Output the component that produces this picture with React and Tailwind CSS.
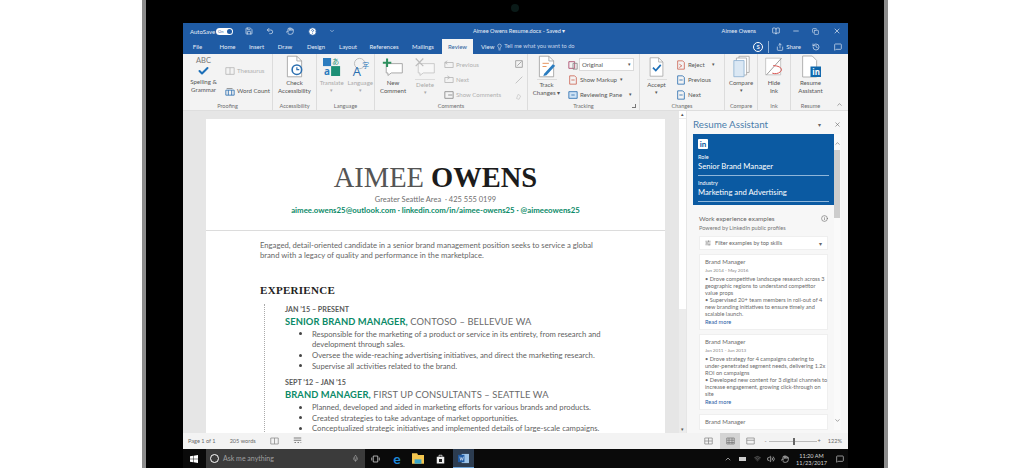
import React from 'react';
import {
  Save, Undo2, Hand, HelpCircle, ChevronDown, ChevronUp, Lightbulb, Share, History, MessageSquare,
  X, Minus, Copy, BookOpen, Check, SlidersHorizontal, Info, Mic, Volume2, Wifi,
} from 'lucide-react';

const tabs = [
  ['File', 'w-[29px]'],
  ['Home', 'w-[31px]'],
  ['Insert', 'w-[27px]'],
  ['Draw', 'w-[30px]'],
  ['Design', 'w-[32px]'],
  ['Layout', 'w-[32px]'],
  ['References', 'w-[40px]'],
  ['Mailings', 'w-[38px]'],
];

const DocIcon = ({ className, children }) => (
  <svg viewBox="0 0 24 28" className={className} fill="none">
    <path d="M3 1h12l6 6v20H3z" fill="#fff" stroke="#9a9a9a" />
    <path d="M15 1v6h6" stroke="#9a9a9a" />
    {children}
  </svg>
);

const SmallIcon = ({ color = '#b7b7b7', children }) => (
  <svg viewBox="0 0 12 12" className="w-[10px] h-[10px] shrink-0" fill="none" stroke={color}>
    {children}
  </svg>
);

const Group = ({ label, className, children, launcher }) => (
  <div className={`relative flex flex-col h-full border-r border-[#dcdcdc] ${className}`}>
    <div className="flex-1 min-h-0 flex">{children}</div>
    <div className="h-[8px] text-center text-[5.6px] leading-[8px] text-[#6f6f6f]">{label}</div>
    {launcher && <span className="absolute right-[3px] bottom-[2px] w-[4px] h-[4px] border-r border-b border-[#777]" />}
  </div>
);

const BigButton = ({ icon, lines, className = '', muted, caret, rule }) => (
  <div className={`flex flex-col items-center text-[6.1px] leading-[8px] ${muted ? 'text-[#a9a9a9]' : 'text-[#555]'} ${className}`}>
    <div className="h-[25px] flex items-center justify-center">{icon}</div>
    {rule && <span className="w-[20px] h-px bg-[#dcdcdc] mb-[1px]" />}
    {lines.map((l) => <span key={l} className="whitespace-nowrap">{l}</span>)}
    {caret && <span className="text-[5px] leading-[6px]">▾</span>}
  </div>
);

const SmallButton = ({ icon, label, muted, caret }) => (
  <div className={`flex items-center gap-[2px] h-[15px] text-[6.1px] whitespace-nowrap ${muted ? 'text-[#b0b0b0]' : 'text-[#555]'}`}>
    {icon}
    <span>{label}</span>
    {caret && <span className="text-[5px] ml-[1px]">▾</span>}
  </div>
);

const Ribbon = () => (
  <div className="h-[57px] bg-[#f3f3f3] flex border-b border-[#dedede] shrink-0">
    <Group label="Proofing" className="w-[90px]">
      <div className="w-[39px] pl-[2px] flex flex-col items-center text-[6.1px] leading-[7.5px] text-[#555]">
        <span className="text-[7.5px] leading-[8px] text-[#777] mt-[3px]">ABC</span>
        <Check className="w-[15px] h-[12px] text-[#1c6fb8]" strokeWidth={4} />
        <span className="mt-[1px]">Spelling &amp;</span>
        <span>Grammar</span>
      </div>
      <div className="pl-[3px] pt-[9px] flex flex-col gap-[5px]">
        <SmallButton muted label="Thesaurus" icon={<SmallIcon><path d="M1 2h10v8H1zM6 2v8" /></SmallIcon>} />
        <SmallButton
          label="Word Count"
          icon={<SmallIcon color="#2b6fb0"><path d="M1 5h10v6H1zM4 5v6M8 5v6" /><path d="M2 3h7" stroke="#888" /></SmallIcon>}
        />
      </div>
    </Group>
    <Group label="Accessibility" className="w-[44px]">
      <BigButton
        className="flex-1"
        lines={['Check', 'Accessibility']}
        icon={
          <DocIcon className="w-[19px] h-[23px]">
            <circle cx="15" cy="18" r="6" fill="#fff" stroke="#2b6fb0" strokeWidth="2" />
            <path d="M15 15v3h3" stroke="#2b6fb0" strokeWidth="1.5" />
          </DocIcon>
        }
      />
    </Group>
    <Group label="Language" className="w-[58px]">
      <BigButton
        className="w-[30px]"
        muted
        caret
        lines={['Translate']}
        icon={
          <svg viewBox="0 0 20 22" className="w-[18px] h-[20px] overflow-visible">
            <rect x="0" y="1" width="9" height="9" fill="#2b7cbf" />
            <rect x="9" y="10" width="10" height="11" fill="#1d8f76" />
            <text x="10" y="8" fontSize="8" fill="#1d8f76" fontFamily="'Noto Sans CJK JP', sans-serif">あ</text>
            <text x="1" y="20" fontSize="11" fill="#2b7cbf" fontFamily="'Open Sans', sans-serif" fontWeight="700">a</text>
          </svg>
        }
      />
      <BigButton
        className="w-[28px]"
        muted
        caret
        lines={['Language']}
        icon={
          <svg viewBox="0 0 22 22" className="w-[19px] h-[20px] overflow-visible">
            <circle cx="10" cy="7" r="6" fill="none" stroke="#b5b5b5" />
            <text x="2" y="21" fontSize="15" fill="#2b6fb0" fontFamily="'Open Sans', sans-serif">A</text>
            <text x="13" y="12" fontSize="8" fill="#2b7cbf" fontFamily="'Noto Sans CJK SC', sans-serif">字</text>
          </svg>
        }
      />
    </Group>
    <Group label="Comments" className="w-[153px]">
      <BigButton
        className="w-[36px]"
        lines={['New', 'Comment']}
        icon={
          <svg viewBox="0 0 26 22" className="w-[22px] h-[20px]" fill="none">
            <path d="M5 7h19v11H11l-4 3v-3H5z" fill="#fff" stroke="#9a9a9a" />
            <path d="M6 1v10M1 6h10" stroke="#2e8f5e" strokeWidth="2.4" />
          </svg>
        }
      />
      <BigButton
        className="w-[28px]"
        muted
        caret
        rule
        lines={['Delete']}
        icon={
          <svg viewBox="0 0 26 22" className="w-[22px] h-[20px]" fill="none" stroke="#c4c4c4">
            <path d="M5 7h19v11H11l-4 3v-3H5z" fill="#f7f7f7" />
            <path d="M2 1l9 9M11 1l-9 9" stroke="#bbb" strokeWidth="1.4" />
          </svg>
        }
      />
      <div className="flex-1 pl-[5px] pt-[3px] flex flex-col">
        <SmallButton muted label="Previous" icon={<SmallIcon><path d="M1 3h10v6H1zM4 1L1 3l3 2" /></SmallIcon>} />
        <SmallButton muted label="Next" icon={<SmallIcon><path d="M1 3h10v6H1zM4 1l3 2-3 2" /></SmallIcon>} />
        <SmallButton muted label="Show Comments" icon={<SmallIcon color="#888"><path d="M1 2h10v8H1zM5 6h5" /></SmallIcon>} />
      </div>
      <div className="w-[16px] pt-[5px] flex flex-col gap-[6px] items-center">
        <SmallIcon color="#999"><path d="M2 2h8v8H2zM4 8l5-5" /></SmallIcon>
        <SmallIcon color="#bbb"><path d="M2 10l8-8" /></SmallIcon>
        <SmallIcon color="#ccc"><path d="M3 9l2-5 3 2-2 4z" /></SmallIcon>
      </div>
    </Group>
    <Group label="Tracking" className="w-[112px]" launcher>
      <BigButton
        className="w-[37px]"
        rule
        lines={['Track', 'Changes ▾']}
        icon={
          <DocIcon className="w-[19px] h-[23px]">
            <path d="M7 10h8M7 14h5" stroke="#e07b39" />
            <path d="M9 23l11-12 3 2-11 12-4 1z" fill="#2b7cbf" />
          </DocIcon>
        }
      />
      <div className="flex-1 pl-[3px] pt-[4px] flex flex-col text-[6.1px] text-[#555]">
        <div className="flex items-center gap-[1px] h-[14px]">
          <SmallIcon color="#a46"><path d="M1 2h7v8H1z" /><path d="M6 4h5v7H6z" stroke="#888" /></SmallIcon>
          <div className="w-[55px] h-[13px] bg-white border border-[#dadada] flex items-center justify-between px-[2px]">
            <span>Original</span>
            <span className="text-[5px]">▾</span>
          </div>
        </div>
        <div className="mt-[1px]">
          <SmallButton caret label="Show Markup" icon={<SmallIcon color="#c65"><path d="M2 1h6l2 2v8H2z" /><path d="M4 6h4" /></SmallIcon>} />
        </div>
        <div className="flex items-center justify-between pr-[7px]">
          <SmallButton label="Reviewing Pane" icon={<SmallIcon color="#2b6fb0"><path d="M1 2h10v8H1z" fill="#cfe3f5" /><path d="M4 6h4" /></SmallIcon>} />
          <span className="text-[5px]">▾</span>
        </div>
      </div>
    </Group>
    <Group label="Changes" className="w-[85px]">
      <BigButton
        className="w-[33px]"
        caret
        rule
        lines={['Accept']}
        icon={
          <DocIcon className="w-[17px] h-[22px]">
            <path d="M7 15l4 4 7-8" stroke="#1c6fb8" strokeWidth="2.4" />
          </DocIcon>
        }
      />
      <div className="flex-1 pl-[3px] pt-[3px] flex flex-col">
        <div className="flex items-center justify-between pr-[9px]">
          <SmallButton label="Reject" icon={<SmallIcon color="#c65"><path d="M2 1h6l2 2v8H2z" /><path d="M4 5l3 2-3 2" /></SmallIcon>} />
          <span className="text-[5px] text-[#555]">▾</span>
        </div>
        <SmallButton label="Previous" icon={<SmallIcon color="#2b6fb0"><path d="M2 1h6l2 2v8H2z" /><path d="M8 6H4" /></SmallIcon>} />
        <SmallButton label="Next" icon={<SmallIcon color="#2b6fb0"><path d="M2 1h6l2 2v8H2z" /><path d="M4 6h4" /></SmallIcon>} />
      </div>
    </Group>
    <Group label="Compare" className="w-[33px]">
      <BigButton
        className="flex-1"
        caret
        lines={['Compare']}
        icon={
          <svg viewBox="0 0 20 26" className="w-[17px] h-[23px]" fill="#fff" stroke="#a8a8a8">
            <path d="M7 1h12v19H7z" />
            <path d="M4 3h12v20H4z" />
            <path d="M1 6h12v19H1z" fill="#dbe8f4" stroke="#8fb2d2" />
          </svg>
        }
      />
    </Group>
    <Group label="Ink" className="w-[33px]">
      <BigButton
        className="flex-1"
        lines={['Hide', 'Ink']}
        icon={
          <svg viewBox="0 0 24 24" className="w-[20px] h-[21px]" fill="none">
            <path d="M2 2h18v20H2z" fill="#fff" stroke="#bdbdbd" />
            <path d="M3 22L21 2" stroke="#8a8a8a" />
            <path d="M11 11c8 0 12 4 9 7-3 3-7 3-10 2" stroke="#d9534f" strokeWidth="1.2" />
          </svg>
        }
      />
    </Group>
    <Group label="Resume" className="w-[39px] border-r-0">
      <BigButton
        className="flex-1"
        lines={['Resume', 'Assistant']}
        icon={
          <svg viewBox="0 0 24 26" className="w-[21px] h-[23px]" fill="none">
            <path d="M3 1h11l5 5v19H3z" fill="#fff" stroke="#a8a8a8" />
            <rect x="12" y="13" width="12" height="12" fill="#0f68ad" />
            <text x="14" y="23" fontSize="9" fontWeight="700" fill="#fff" fontFamily="'Open Sans', sans-serif">in</text>
          </svg>
        }
      />
    </Group>
    <div className="flex-1 flex items-end justify-center pb-[2px]">
      <ChevronUp className="w-[7px] h-[7px] text-[#666]" />
    </div>
  </div>
);

const TitleBar = () => (
  <div className="bg-[#1f5ba4] text-[#e7eef7] shrink-0">
    <div className="h-[16px] flex items-center text-[6px] relative">
      <span className="ml-[7px] w-[26px] whitespace-nowrap">AutoSave</span>
      <span className="ml-[0px] w-[17px] h-[7px] rounded-full bg-white text-[#1f5ba4] text-[4px] leading-[7px] pl-[2px] relative">
        On
        <span className="absolute right-[1px] top-[1px] w-[5px] h-[5px] rounded-full bg-[#1f5ba4]" />
      </span>
      <Save className="ml-[12px] w-[8px] h-[8px]" />
      <Undo2 className="ml-[13px] w-[8px] h-[8px]" />
      <Hand className="ml-[12px] w-[8px] h-[8px]" />
      <HelpCircle className="ml-[14px] w-[9px] h-[9px] text-[#1f5ba4] fill-white" />
      <ChevronDown className="ml-[12px] w-[6px] h-[6px]" />
      <span className="absolute left-[290px] text-[5.6px] whitespace-nowrap">Aimee Owens Resume.docx - Saved ▾</span>
      <span className="ml-auto text-[5.6px] whitespace-nowrap">Aimee Owens</span>
      <BookOpen className="ml-[16px] w-[8px] h-[8px]" />
      <Minus className="ml-[12px] w-[8px] h-[8px]" />
      <Copy className="ml-[12px] w-[7px] h-[7px]" />
      <X className="ml-[14px] mr-[7px] w-[8px] h-[8px]" />
    </div>
    <div className="h-[15px] flex items-center text-[6px]">
      {tabs.map(([name, w]) => (
        <span key={name} className={`${w} text-center`}>{name}</span>
      ))}
      <span className="w-[31px] h-full bg-[#f3f3f3] text-[#2b5f9e] text-center leading-[16px]">Review</span>
      <span className="ml-[8px]">View</span>
      <Lightbulb className="ml-[2px] w-[7px] h-[8px]" />
      <span className="ml-[1px] text-[5.7px] text-[#c6d6ea]">Tell me what you want to do</span>
      <span className="ml-auto w-[10px] h-[10px] rounded-full border border-white text-[6px] leading-[8px] text-center font-bold">S</span>
      <span className="ml-[5px] w-px h-[12px] bg-[#8fb0d6]" />
      <Share className="ml-[7px] w-[8px] h-[8px]" />
      <span className="ml-[2px]">Share</span>
      <History className="ml-[11px] w-[8px] h-[8px]" />
      <MessageSquare className="ml-[14px] mr-[6px] w-[8px] h-[8px]" />
    </div>
  </div>
);

const Bullets = ({ items }) => (
  <ul className="pl-[27px] text-[7.7px] leading-[10.6px] text-[#5f5f5f]">
    {items.map((it) => (
      <li key={it} className="relative whitespace-pre-line">
        <span className="absolute left-[-13px] top-[3.5px] w-[3px] h-[3px] rounded-full bg-[#444]" />
        {it}
      </li>
    ))}
  </ul>
);

const Job = ({ date, title, rest, items }) => (
  <div className="mb-[6px]">
    <div className="text-[7.2px] leading-[11px] font-bold text-[#5a5a5a]">{date}</div>
    <div className="text-[9.35px] leading-[13px] whitespace-nowrap tracking-[0.1px] mb-[1px]">
      <span className="font-bold text-[#0b8a68]">{title}</span>
      <span className="text-[#6a6a6a]"> {rest}</span>
    </div>
    <Bullets items={items} />
  </div>
);

const Page = () => (
  <div className="w-[459px] h-[314px] ml-[23px] mt-[8px] bg-white overflow-hidden">
    <div className="h-[112px] border-b border-[#dcdcdc] flex flex-col items-center pt-[44px]">
      <div className="font-['Liberation_Serif',serif] text-[28.5px] leading-[30px] text-[#555] whitespace-nowrap">
        AIMEE <span className="font-bold text-[#1c1c1c]">OWENS</span>
      </div>
      <div className="text-[7.5px] leading-[11px] mt-[1px] text-[#6f6f6f] whitespace-pre">Greater Seattle Area  · 425 555 0199</div>
      <div className="text-[7.83px] leading-[10px] font-bold text-[#0b8a68] whitespace-nowrap">
        aimee.owens25@outlook.com · linkedin.com/in/aimee-owens25 · @aimeeowens25
      </div>
    </div>
    <div className="pl-[54px] pt-[9px] text-[7.7px] leading-[10.4px] text-[#666] whitespace-pre-line">
      {'Engaged, detail-oriented candidate in a senior brand management position seeks to service a global\nbrand with a legacy of quality and performance in the marketplace.'}
    </div>
    <div className="pl-[54px] mt-[23px] font-['Liberation_Serif',serif] font-bold text-[11px] leading-[13px] tracking-[0.3px] text-[#222]">
      EXPERIENCE
    </div>
    <div className="ml-[58px] mt-[7px] pl-[20px] border-l border-dotted border-[#aaa] h-[140px]">
      <Job
        date="JAN ’15 – PRESENT"
        title="SENIOR BRAND MANAGER,"
        rest="CONTOSO – BELLEVUE WA"
        items={[
          'Responsible for the marketing of a product or service in its entirety, from research and\ndevelopment through sales.',
          'Oversee the wide-reaching advertising initiatives, and direct the marketing research.',
          'Supervise all activities related to the brand.',
        ]}
      />
      <Job
        date="SEPT ’12 – JAN ’15"
        title="BRAND MANAGER,"
        rest="FIRST UP CONSULTANTS – SEATTLE WA"
        items={[
          'Planned, developed and aided in marketing efforts for various brands and products.',
          'Created strategies to take advantage of market opportunities.',
          'Conceptualized strategic initiatives and implemented details of large-scale campaigns.',
        ]}
      />
    </div>
  </div>
);

const Example = ({ date, lines }) => (
  <div className="bg-white border border-[#efefef] px-[5px] pt-[2px] pb-[3px] mb-[4px] text-[5.6px] leading-[7px] text-[#6b6b6b]">
    <div className="text-[6px] leading-[9px]">Brand Manager</div>
    {date && <div className="text-[4.6px] leading-[9px] text-[#888]">{date}</div>}
    {lines && <div className="whitespace-pre">{lines}</div>}
    {lines && <div className="text-[#1f5ba4] leading-[8px] mt-[1px]">Read more</div>}
  </div>
);

const Pane = () => (
  <div className="w-[161px] h-full bg-[#f7f7f7] pl-[6px] pr-[7px] flex flex-col overflow-hidden">
    <div className="h-[23px] shrink-0 flex items-center pt-[3px]">
      <span className="text-[9.8px] text-[#4b7dab]">Resume Assistant</span>
      <span className="ml-auto text-[6px] text-[#666]">▾</span>
      <X className="ml-[13px] w-[7px] h-[7px] text-[#666]" />
    </div>
    <div className="flex-1 min-h-0 flex">
      <div className="w-[141px] min-h-0 overflow-hidden bg-[#f1f1f1]">
        <div className="h-[71px] bg-[#0b5aa2] px-[5px] pt-[5px] text-white">
          <div className="w-[10px] h-[10px] bg-white rounded-[1px] text-[#0b5aa2] text-[8px] leading-[10px] font-bold text-center">in</div>
          <div className="text-[5.5px] leading-[8px] mt-[4px]">Role</div>
          <div className="text-[7.7px] leading-[10px] border-b border-[#8fb6da] pb-[4px]">Senior Brand Manager</div>
          <div className="text-[5.5px] leading-[8px] mt-[3px]">Industry</div>
          <div className="text-[7.7px] leading-[10px] border-b border-[#8fb6da] pb-[4px]">Marketing and Advertising</div>
        </div>
        <div className="px-[6px] pt-[9px] bg-[#f7f7f7]">
          <div className="flex items-center text-[#666]">
            <span className="text-[6.4px] leading-[9px]">Work experience examples</span>
            <Info className="ml-auto w-[7px] h-[7px]" />
          </div>
          <div className="text-[5.6px] leading-[9px] text-[#777]">Powered by LinkedIn public profiles</div>
          <div className="h-[14px] mt-[4px] mb-[4px] bg-white border border-[#efefef] flex items-center px-[5px] text-[5.6px] text-[#666]">
            <SlidersHorizontal className="w-[6px] h-[6px] mr-[4px]" />
            Filter examples by top skills
            <span className="ml-auto text-[6px]">▾</span>
          </div>
          <Example
            date="Jun 2014 - May 2016"
            lines={'• Drove competitive landscape research across 3\ngeographic regions to understand competitor\nvalue props\n• Supervised 20+ team members in roll-out of 4\nnew branding initiatives to ensure timely and\nscalable launch.'}
          />
          <Example
            date="Jan 2011 - Jun 2013"
            lines={'• Drove strategy for 4 campaigns catering to\nunder-penetrated segment needs, delivering 1.2x\nROI on campaigns\n• Developed new content for 3 digital channels to\nincrease engagement, growing click-through on\nsite'}
          />
          <Example />
        </div>
      </div>
      <div className="w-[7px] bg-[#fafafa] flex flex-col items-center justify-between relative">
        <div className="w-full">
          <ChevronUp className="w-[7px] h-[7px] mt-[6px] text-[#666]" />
          <div className="w-[6px] h-[68px] mt-[3px] bg-[#cdcdcd]" />
        </div>
        <ChevronDown className="w-[7px] h-[7px] mb-[6px] text-[#666]" />
      </div>
    </div>
    <div className="h-[3px] shrink-0" />
  </div>
);

const DocArea = () => (
  <div className="flex-1 min-h-0 flex bg-[#e6e6e6]">
    <div className="flex-1 min-w-0"><Page /></div>
    <div className="w-[7px] mr-[1px] flex flex-col bg-[#ececec]">
      <div className="h-[7px] bg-white text-[5px] leading-[7px] text-center text-[#555]">▴</div>
      <div className="h-[190px] bg-white mt-[1px]" />
      <div className="mt-auto h-[7px] text-[5px] leading-[7px] text-center text-[#555]">▾</div>
    </div>
    <Pane />
  </div>
);

const StatusBar = () => (
  <div className="h-[16px] bg-[#f3f3f3] shrink-0 flex items-center text-[5.6px] text-[#6a6a6a]">
    <span className="ml-[5px]">Page 1 of 1</span>
    <span className="ml-[14px]">205 words</span>
    <svg viewBox="0 0 12 10" className="ml-[14px] w-[9px] h-[8px]" fill="none" stroke="#888"><path d="M1 1h10v8H1zM6 1v8" /></svg>
    <svg viewBox="0 0 12 10" className="ml-[14px] w-[9px] h-[8px]" fill="none" stroke="#555"><path d="M1 1h10M1 4h10M2 7h2M6 7h2M10 7h1" /></svg>
    <svg viewBox="0 0 12 10" className="ml-auto w-[9px] h-[8px]" fill="none" stroke="#888"><path d="M1 1h10v8H1zM6 1v8M1 5h10" /></svg>
    <span className="ml-[7px] w-[20px] h-[16px] bg-[#d4d4d4] flex items-center justify-center">
      <svg viewBox="0 0 12 10" className="w-[9px] h-[8px]" fill="none" stroke="#777"><path d="M1 1h10v8H1zM1 4h10M1 7h10M4 1v8M8 1v8" /></svg>
    </span>
    <svg viewBox="0 0 12 10" className="ml-[6px] w-[9px] h-[8px]" fill="none" stroke="#888"><path d="M1 1h10v8H1zM1 4h10" /></svg>
    <span className="ml-[9px]">-</span>
    <span className="ml-[2px] w-[48px] h-px bg-[#bbb] relative">
      <span className="absolute left-[24px] top-[-3px] w-[2px] h-[7px] bg-[#666]" />
    </span>
    <span className="ml-[1px]">+</span>
    <span className="ml-[7px] mr-[6px]">122%</span>
  </div>
);

const Taskbar = () => (
  <div className="h-[19px] bg-[#0a0a0a] shrink-0 flex items-center text-[#d6d6d6]">
    <svg viewBox="0 0 10 10" className="ml-[7px] w-[8px] h-[8px]" fill="#fff">
      <path d="M0 1.5L4 1v3.7H0zM4.6 .9L10 0v4.7H4.6zM0 5.3h4V9l-4-.5zM4.6 5.3H10V10l-5.4-.8z" />
    </svg>
    <div className="ml-[8px] w-[159px] h-[19px] bg-[#3b3b3b] flex items-center">
      <span className="ml-[4px] w-[9px] h-[9px] rounded-full border-[1.5px] border-white" />
      <span className="ml-[4px] text-[7px] text-[#a0a0a0]">Ask me anything</span>
      <Mic className="ml-auto mr-[6px] w-[7px] h-[7px] text-[#aaa]" />
    </div>
    <svg viewBox="0 0 12 10" className="ml-[6px] w-[9px] h-[8px]" fill="none" stroke="#ddd"><path d="M3 1h6v8H3zM1 3v4M11 3v4" /></svg>
    <span className="ml-[11px] w-[12px] text-[14px] leading-[14px] font-bold text-[#1e88d9] text-center">e</span>
    <svg viewBox="0 0 14 12" className="ml-[9px] w-[12px] h-[11px]">
      <path d="M0 0h6l1 2h7v10H0z" fill="#f4c64f" />
      <rect x="3" y="7" width="8" height="5" fill="#3aa6c9" />
    </svg>
    <svg viewBox="0 0 12 12" className="ml-[12px] w-[9px] h-[10px]" fill="#eee">
      <path d="M1 3h10v9H1z" />
      <path d="M4 3V1h4v2" fill="none" stroke="#eee" />
      <rect x="4" y="6" width="4" height="4" fill="#222" />
    </svg>
    <div className="ml-[8px] w-[21px] h-[19px] bg-[#2c3c50] border-b border-[#6ea4d8] flex items-center justify-center">
      <svg viewBox="0 0 12 12" className="w-[11px] h-[11px]">
        <rect x="4" y="1" width="8" height="10" fill="#9cc3e8" />
        <rect x="0" y="2" width="7" height="8" fill="#1f5ba4" />
        <path d="M2 4l1 4 1-3 1 3 1-4" stroke="#fff" strokeWidth=".6" fill="none" />
      </svg>
    </div>
    <ChevronUp className="ml-auto w-[8px] h-[8px]" />
    <span className="ml-[7px] w-[7px] h-[4px] bg-[#ccc]" />
    <Wifi className="ml-[8px] w-[7px] h-[7px] text-[#888]" />
    <Volume2 className="ml-[6px] w-[8px] h-[8px]" />
    <Hand className="ml-[6px] w-[8px] h-[8px]" />
    <div className="ml-[7px] flex flex-col items-center text-[5.6px] leading-[7px]">
      <span>11:20 AM</span>
      <span>11/23/2017</span>
    </div>
    <MessageSquare className="ml-[9px] mr-[4px] w-[8px] h-[8px]" />
  </div>
);

export default function App() {
  return (
    <div className="w-[1030px] h-[468px] bg-white overflow-hidden">
      <div className="relative ml-[142px] w-[746px] h-[468px] bg-black border-x-[4px] border-[#8c8c8c] pl-[37px] pr-[36px] pt-[23px]">
        {/* device camera, barely visible in the bezel */}
        <span className="absolute left-[365px] top-[4px] w-[8px] h-[8px] rounded-full bg-[#0a1a18]" />
        <div className="w-[665px] h-[445px] flex flex-col bg-white font-['Lato',sans-serif]">
          <TitleBar />
          <Ribbon />
          <DocArea />
          <StatusBar />
          <Taskbar />
        </div>
      </div>
    </div>
  );
}
